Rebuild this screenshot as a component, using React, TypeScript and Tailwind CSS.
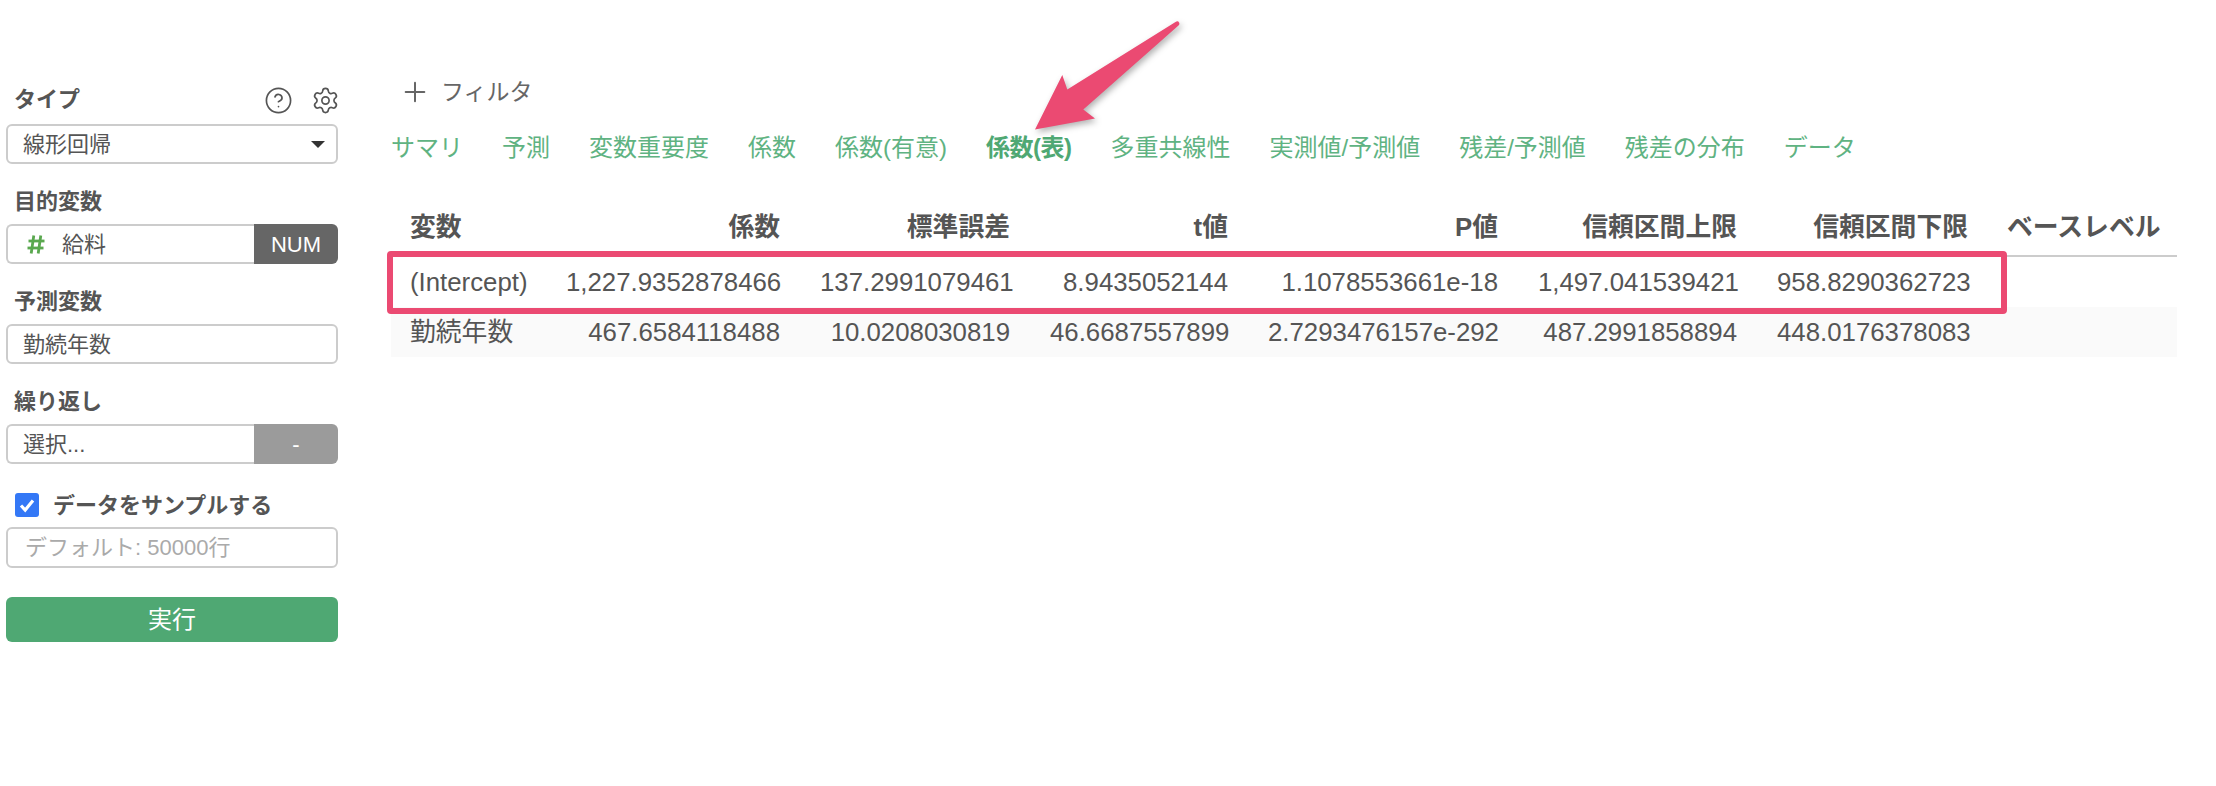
import { CircleHelp, Plus, Settings } from "lucide-react";

const tabs = [
    "サマリ",
    "予測",
    "変数重要度",
    "係数",
    "係数(有意)",
    "係数(表)",
    "多重共線性",
    "実測値/予測値",
    "残差/予測値",
    "残差の分布",
    "データ",
];

const columns = ["変数", "係数", "標準誤差", "t値", "P値", "信頼区間上限", "信頼区間下限", "ベースレベル"];

const rows = [
    ["(Intercept)", "1,227.9352878466", "137.2991079461", "8.9435052144", "1.1078553661e-18", "1,497.041539421", "958.8290362723", ""],
    ["勤続年数", "467.6584118488", "10.0208030819", "46.6687557899", "2.7293476157e-292", "487.2991858894", "448.0176378083", ""],
];

function Label({ children }: { children: React.ReactNode }) {
    return <div className="h-6 pl-2 text-[22px] leading-6 font-bold text-[#555]">{children}</div>;
}

function HashIcon() {
    return (
        <svg width="18" height="19" viewBox="0 0 18 19" fill="none" stroke="#5aa84f" strokeWidth="2.8">
            <path d="M6.8 0.5 L4.2 18.5" />
            <path d="M13.8 0.5 L11.2 18.5" />
            <path d="M1.5 6 H17.5" />
            <path d="M0.5 13 H16.5" />
        </svg>
    );
}

function Sidebar() {
    return (
        <aside className="w-[332px] shrink-0 pt-[11px]">
            {/* Type */}
            <div className="flex items-center justify-between h-6">
                <Label>タイプ</Label>
                <div className="flex items-center gap-[18px] -mr-[2px] text-[#555]">
                    <CircleHelp size={29} strokeWidth={1.4} />
                    <Settings size={29} strokeWidth={1.4} />
                </div>
            </div>
            <div className="mt-3 h-10 flex items-center justify-between border-2 border-[#ccc] rounded-md pl-[15px] pr-[11px] text-[22px] text-[#555]">
                <span>線形回帰</span>
                <span className="w-0 h-0 border-x-[7px] border-x-transparent border-t-[7px] border-t-[#333]"></span>
            </div>

            {/* Target */}
            <div className="mt-[26px]">
                <Label>目的変数</Label>
            </div>
            <div className="mt-[10px] h-10 flex">
                <div className="flex-1 flex items-center gap-[17px] border-2 border-r-0 border-[#ccc] rounded-l-md pl-[19px] text-[22px] text-[#555]">
                    <HashIcon />
                    <span>給料</span>
                </div>
                <div className="w-[84px] flex items-center justify-center bg-[#666] rounded-r-md text-[22px] text-white">NUM</div>
            </div>

            {/* Predictors */}
            <div className="mt-[26px]">
                <Label>予測変数</Label>
            </div>
            <div className="mt-[10px] h-10 flex items-center border-2 border-[#ccc] rounded-md pl-[15px] text-[22px] text-[#555]">
                勤続年数
            </div>

            {/* Repeat */}
            <div className="mt-[26px]">
                <Label>繰り返し</Label>
            </div>
            <div className="mt-[10px] h-10 flex">
                <div className="flex-1 flex items-center border-2 border-r-0 border-[#ccc] rounded-l-md pl-[15px] text-[22px] text-[#555]">
                    選択...
                </div>
                <div className="w-[84px] flex items-center justify-center bg-[#9b9b9b] rounded-r-md text-[22px] text-white">-</div>
            </div>

            {/* Sampling */}
            <div className="mt-[29px] h-6 flex items-center pl-[9px] gap-[14px]">
                <span className="w-6 h-6 flex items-center justify-center rounded-[3px] bg-[#3478f6]">
                    <svg width="18" height="18" viewBox="0 0 18 18" fill="none">
                        <path d="M3 9.5 L7.2 14 L15 4.5" stroke="#fff" strokeWidth="3.2" />
                    </svg>
                </span>
                <span className="text-[22px] font-bold text-[#555]">データをサンプルする</span>
            </div>
            <input
                readOnly
                placeholder="デフォルト: 50000行"
                className="mt-[10px] w-full h-[41px] border-2 border-[#ccc] rounded-md pl-[17px] text-[22px] text-[#555] placeholder:text-[#aaa] outline-none"
            />
            <button className="mt-[29px] w-full h-[45px] bg-[#4fa873] rounded-md text-[24px] text-white">実行</button>
        </aside>
    );
}

function CoefTable() {
    return (
        <div className="relative mt-[37px] w-[1786px]">
            <table className="w-full table-fixed border-collapse text-[25.8px] text-[#555]">
                <colgroup>
                    <col className="w-[155px]" />
                    <col className="w-[254px]" />
                    <col className="w-[230px]" />
                    <col className="w-[218px]" />
                    <col className="w-[270px]" />
                    <col className="w-[239px]" />
                    <col className="w-[231px]" />
                    <col className="w-[189px]" />
                </colgroup>
                <thead>
                    <tr className="h-14 border-b-2 border-[#ccc]">
                        {columns.map((c, i) => (
                            <th
                                key={c}
                                className={`font-bold whitespace-nowrap pr-5 ${i === 0 || i === 7 ? "text-left pl-[19px]" : "text-right pl-5"}`}
                            >
                                {c}
                            </th>
                        ))}
                    </tr>
                </thead>
                <tbody>
                    {rows.map((row, r) => (
                        <tr key={r} className={r === 0 ? "h-[51px]" : "h-[50px] bg-[#fafafa]"}>
                            {row.map((v, i) => (
                                <td key={i} className={`pr-5 whitespace-nowrap ${i === 0 ? "text-left pl-[19px]" : "text-right pl-5"}`}>
                                    {v}
                                </td>
                            ))}
                        </tr>
                    ))}
                </tbody>
            </table>
            {/* annotation box */}
            <div className="absolute top-[51px] -left-1 w-[1620px] h-[63px] border-[6px] border-[#eb4a72] rounded-[4px]"></div>
        </div>
    );
}

export default function App() {
    return (
        <div
            className="relative h-[786px] overflow-hidden bg-white flex pl-[6px] pt-[77px] gap-[53px]"
            style={{ fontFamily: '"Liberation Sans", "Noto Sans CJK JP", sans-serif' }}
        >
            <Sidebar />
            <main className="flex-1">
                <div className="h-[30px] flex items-center pl-2 gap-[10px] text-[23px] text-[#666]">
                    <Plus size={32} strokeWidth={1.5} />
                    <span>フィルタ</span>
                </div>
                <nav className="mt-[26px] h-[30px] flex items-center gap-[39px] text-[24px] text-[#5fb382]">
                    {tabs.map((t) => (
                        <span key={t} className={t === "係数(表)" ? "font-bold tracking-[-0.5px] text-[#4fa873]" : ""}>
                            {t}
                        </span>
                    ))}
                </nav>
                <CoefTable />
            </main>

            {/* annotation arrow */}
            <svg className="absolute left-[1020px] top-0 drop-shadow-[2px_3px_3px_rgba(0,0,0,0.3)]" width="180" height="145" viewBox="1020 0 180 145">
                <path
                    d="M1035 129.5 L1062.3 75 L1067.3 89.5 L1175.5 22 Q1178 20.5 1179 22.5 Q1180 24 1178.5 25.5 L1083.3 109.5 L1095 118.5 Z"
                    fill="#eb4a72"
                />
            </svg>
        </div>
    );
}
